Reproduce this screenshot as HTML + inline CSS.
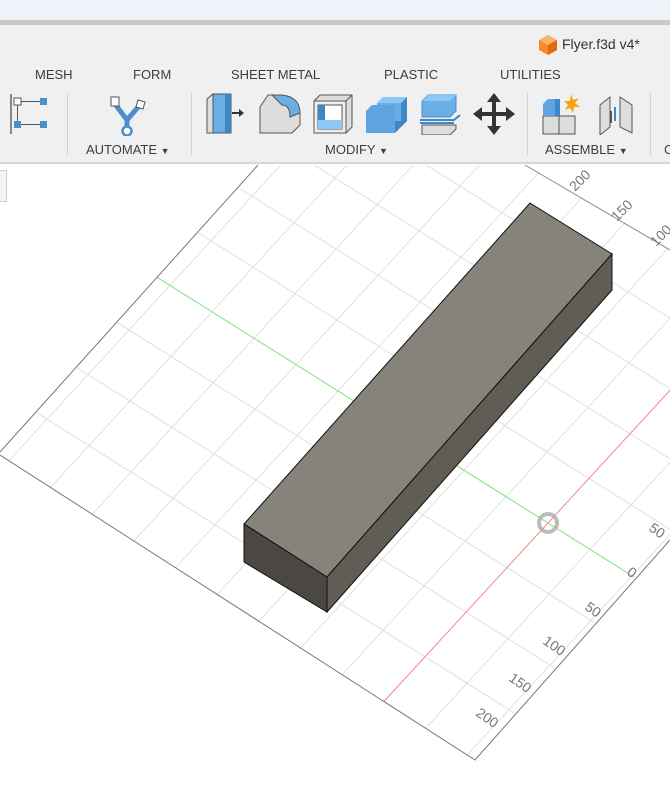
<!DOCTYPE html>
<html><head><meta charset="utf-8"><style>
html,body{margin:0;padding:0;}
body{width:670px;height:810px;overflow:hidden;background:#fff;font-family:"Liberation Sans",sans-serif;position:relative;}
.top{position:absolute;left:0;top:0;width:670px;height:20px;background:#eef2f9;}
.gl{position:absolute;left:0;top:20px;width:670px;height:5px;background:#c9c9c9;}
.tb{position:absolute;left:0;top:25px;width:670px;height:137px;background:#f0f0f0;border-bottom:2px solid #d6d6d6;}
.t{position:absolute;font-size:13px;color:#3c3c3c;white-space:nowrap;}
.sep{position:absolute;top:93px;width:1px;height:63px;background:#d4d4d4;}
svg{position:absolute;}
</style></head><body>
<svg width="670" height="810" style="left:0;top:0">
<defs><clipPath id="c"><polygon points="258,165 525,165 700,268 700,500 475,760 0,455 0,452"/></clipPath></defs>
<g clip-path="url(#c)">
<g transform="matrix(21,13.2,-20.5,22.3,548,523)" fill="none">
<path vector-effect="non-scaling-stroke" stroke="#e0e0e0" stroke-width="1" d="M-18,-11V9M-16,-11V9M-14,-11V9M-12,-11V9M-10,-11V9M-8,-11V9M-6,-11V9M-4,-11V9M-2,-11V9M2,-11V9M4,-11V9 M-20,-8H5M-20,-6H5M-20,-4H5M-20,-2H5M-20,2H5M-20,4H5M-20,6H5"/>
<path vector-effect="non-scaling-stroke" stroke="#7ee07e" d="M-18.7,0H4.3"/>
<path vector-effect="non-scaling-stroke" stroke="#f08a8a" d="M0,-11V8"/>
</g>
</g>
<polyline points="258,165 0,452" stroke="#777" fill="none"/>
<polyline points="0,455 475,760 670,540" stroke="#777" fill="none"/>
<polyline points="525,165 670,250" stroke="#888" fill="none"/>
<circle cx="548" cy="523" r="9" fill="none" stroke="#aaa" stroke-width="4" opacity="0.8"/>
<g font-family="Liberation Sans" font-size="14" fill="#777">
<text transform="translate(575,192) rotate(-45)">200</text>
<text transform="translate(617,222) rotate(-45)">150</text>
<text transform="translate(656,247) rotate(-45)">100</text>
<text transform="translate(648,530) rotate(35)">50</text>
<text transform="translate(626,574) rotate(35)">0</text>
<text transform="translate(584,609) rotate(35)">50</text>
<text transform="translate(542,643) rotate(35)">100</text>
<text transform="translate(508,680) rotate(35)">150</text>
<text transform="translate(475,715) rotate(35)">200</text>
</g>
<polygon points="530,203 612,254 327,577 244,524" fill="#85837a" stroke="#111" stroke-width="1"/>
<polygon points="612,254 612,290 327,612 327,577" fill="#605d55" stroke="#111"/>
<polygon points="244,524 327,577 327,612 244,562" fill="#4b4843" stroke="#111"/>
</svg>
<div style="position:absolute;left:0;top:170px;width:6px;height:30px;background:#f4f4f4;border:1px solid #ccc;border-left:none"></div>
<div class="top"></div><div class="gl"></div>
<div class="tb"></div>
<svg width="22" height="24" style="left:537px;top:33px" viewBox="0 0 22 24"><polygon points="11,2 20,7 20,17 11,22 2,17 2,7" fill="#f5892b"/><polygon points="11,2 20,7 11,12 2,7" fill="#fbb36a"/><polygon points="11,12 20,7 20,17 11,22" fill="#e06a10"/></svg>
<div class="t" style="left:562px;top:36px;font-size:14px;color:#333">Flyer.f3d v4*</div>
<div class="t" style="left:35px;top:67px">MESH</div>
<div class="t" style="left:133px;top:67px">FORM</div>
<div class="t" style="left:231px;top:67px">SHEET METAL</div>
<div class="t" style="left:384px;top:67px">PLASTIC</div>
<div class="t" style="left:500px;top:67px">UTILITIES</div>
<div class="sep" style="left:67px"></div><div class="sep" style="left:191px"></div><div class="sep" style="left:527px"></div><div class="sep" style="left:650px"></div>
<div class="t" style="left:86px;top:142px">AUTOMATE <span style="font-size:9px">▼</span></div>
<div class="t" style="left:325px;top:142px">MODIFY <span style="font-size:9px">▼</span></div>
<div class="t" style="left:545px;top:142px">ASSEMBLE <span style="font-size:9px">▼</span></div>
<div class="t" style="left:664px;top:142px">C</div>
<svg width="40" height="40" style="left:10px;top:94px"><rect x="4" y="4" width="7" height="7" fill="#fff" stroke="#555"/><rect x="30" y="4" width="7" height="7" fill="#4a90d0"/><rect x="4" y="27" width="7" height="7" fill="#4a90d0"/><rect x="30" y="27" width="7" height="7" fill="#4a90d0"/><path d="M11,7.5H30M7.5,11V27M11,30.5H30" stroke="#555"/><rect x="0" y="0" width="2" height="40" fill="#888"/></svg>
<svg width="44" height="42" style="left:107px;top:94px"><path d="M8,10 L20,26 L32,12 M20,26 L20,36" stroke="#4a90d0" stroke-width="5" fill="none"/><rect x="4" y="3" width="8" height="9" fill="#fff" stroke="#555"/><polygon points="31,6 38,8 36,15 29,13" fill="#fff" stroke="#555"/><circle cx="20" cy="37" r="4.5" fill="#fff" stroke="#4a90d0" stroke-width="2.5"/></svg>
<svg width="40" height="42" style="left:205px;top:93px"><polygon points="2,6 8,1 8,40 2,40" fill="#ddd" stroke="#555"/><polygon points="8,1 26,1 26,40 8,40" fill="#6aaee6" stroke="#555"/><polygon points="20,1 26,1 26,40 20,40" fill="#3f86c6"/><path d="M27,20H36" stroke="#333" stroke-width="2"/><polygon points="34,16 39,20 34,24" fill="#333"/></svg>
<svg width="44" height="42" style="left:258px;top:93px"><polygon points="2,14 2,40 34,40 42,32 42,20 14,2 10,2" fill="#ddd" stroke="#555"/><path d="M14,2 L24,2 Q42,4 42,20 L32,24 Q32,12 24,12 Z" fill="#6aaee6" stroke="#555"/></svg>
<svg width="42" height="42" style="left:312px;top:93px"><polygon points="2,8 8,2 40,2 40,34 34,40 2,40" fill="#ddd" stroke="#555"/><path d="M34,8 L40,2 M34,8V40" stroke="#555"/><rect x="2" y="8" width="32" height="32" fill="#eee" stroke="#555"/><rect x="6" y="12" width="24" height="24" fill="#fff" stroke="#555"/><rect x="6" y="12" width="7" height="24" fill="#3f86c6"/><rect x="6" y="27" width="24" height="9" fill="#8cc8f6"/></svg>
<svg width="44" height="42" style="left:365px;top:93px"><polygon points="12,10 18,4 42,4 42,28 36,34 36,28 12,28" fill="#6aaee6"/><polygon points="1,18 7,12 30,12 30,40 1,40" fill="#5ea4e0"/><polygon points="30,28 36,28 36,34 30,40" fill="#3f86c6"/><polygon points="36,10 42,4 42,28 36,34" fill="#3f86c6"/><polygon points="18,4 42,4 36,10 12,10" fill="#8cc8f6"/></svg>
<svg width="42" height="42" style="left:420px;top:93px"><polygon points="2,8 8,2 36,2 36,18 30,24 2,24" fill="#6aaee6" stroke="#4a8cc8"/><polygon points="8,2 36,2 30,8 2,8" fill="#8cc8f6"/><path d="M0,27H34L40,22M0,30H34" stroke="#3f86c6" stroke-width="2" fill="none"/><polygon points="2,32 36,32 36,36 30,42 2,42" fill="#ddd" stroke="#555"/></svg>
<svg width="42" height="42" style="left:473px;top:93px"><path d="M21,4V38M4,21H38" stroke="#333" stroke-width="4"/><polygon points="21,0 28,9 14,9" fill="#333"/><polygon points="21,42 28,33 14,33" fill="#333"/><polygon points="0,21 9,14 9,28" fill="#333"/><polygon points="42,21 33,14 33,28" fill="#333"/></svg>
<svg width="44" height="44" style="left:540px;top:92px"><rect x="3" y="24" width="16" height="18" fill="#ddd" stroke="#555"/><rect x="19" y="24" width="16" height="18" fill="#ddd" stroke="#555"/><polygon points="3,12 8,7 20,7 20,24 3,24" fill="#5ea4e0"/><polygon points="15,7 20,7 20,24 15,24" fill="#3f86c6"/><polygon points="31,2 33,8 39,6 35,11 40,15 34,15 33,21 30,16 25,18 28,13 24,9 30,9" fill="#f6a313"/></svg>
<svg width="40" height="42" style="left:596px;top:93px"><path d="M4,12 L14,4 L14,34 L4,42Z M24,4 L36,12 L36,40 L24,34Z" fill="#ddd" stroke="#555"/><path d="M19,14V28" stroke="#3f86c6" stroke-width="2"/><rect x="14" y="18" width="2" height="12" fill="#555"/></svg>
</body></html>
